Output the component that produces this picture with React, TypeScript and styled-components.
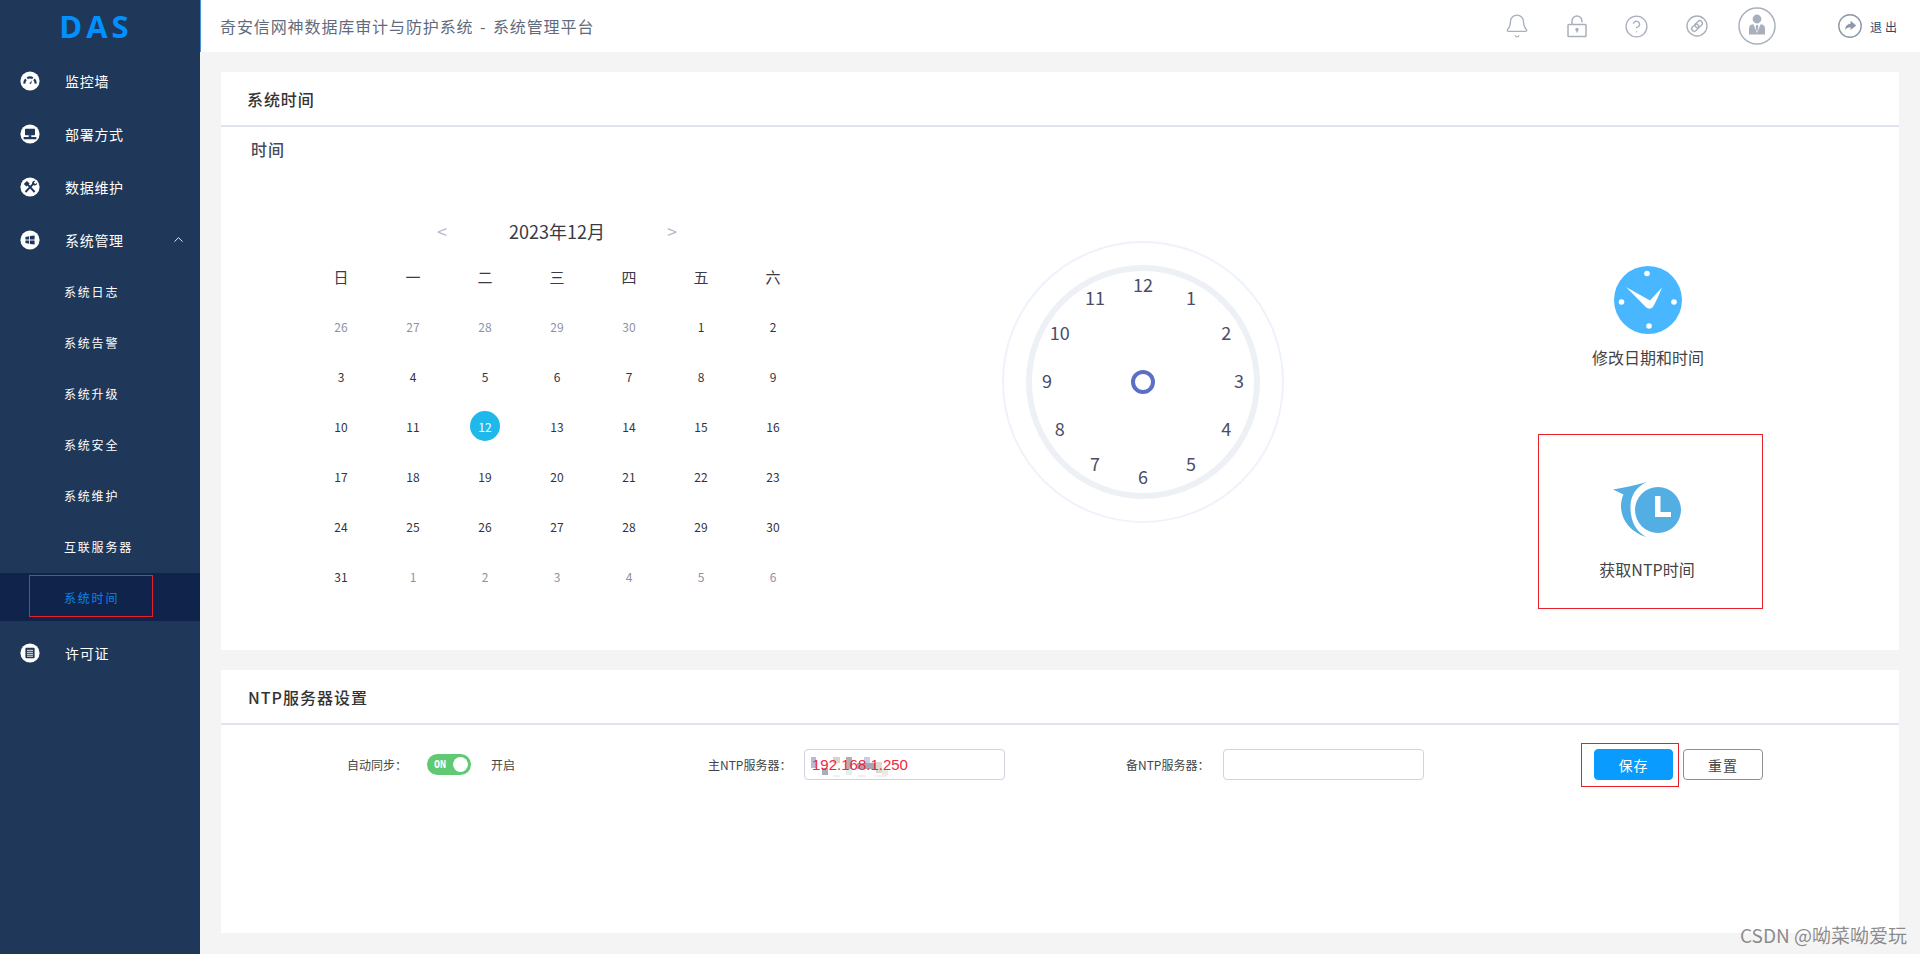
import React from "react";
import styled, { createGlobalStyle } from "styled-components";
import { Bell, ChevronUp, CircleHelp } from "lucide-react";

const GlobalStyle = createGlobalStyle`
  html, body {
    margin: 0;
    padding: 0;
    height: 100%;
    background: #f4f4f4;
    font-family: "Noto Sans CJK SC", "Noto Sans", sans-serif;
  }
  * { box-sizing: border-box; }
`;

const Layout = styled.div`
  display: flex;
  position: relative;
  height: 954px;
  overflow: hidden;
`;

/* ---------- sidebar ---------- */
const Sidebar = styled.aside`
  width: 200px;
  flex-shrink: 0;
  background: #1f3759;
  color: #fff;
`;

const Logo = styled.div`
  height: 54px;
  padding: 5px 8px 0 0;
  text-align: center;
  font-family: "Open Sans", "Noto Sans", sans-serif;
  font-size: 31px;
  line-height: 43px;
  font-weight: 700;
  letter-spacing: 4px;
  color: #0090ff;
`;

const MenuItem = styled.div`
  position: relative;
  display: flex;
  align-items: center;
  height: 53px;
  padding-left: 20px;
  font-size: 14px;
  letter-spacing: 0.7px;
`;

const MenuIcon = styled.span`
  display: flex;
  width: 20px;
  height: 20px;
  margin-right: 25px;
`;

const Caret = styled.span`
  position: absolute;
  left: 171px;
  top: 19px;
  display: flex;
  color: #e6ebf2;
`;

const SubList = styled.div`
  padding: 1px 0 5px;
`;

const SubItem = styled.div<{ $active?: boolean }>`
  position: relative;
  display: flex;
  align-items: center;
  height: 48px;
  margin-bottom: 3px;
  padding-left: 64px;
  font-size: 12px;
  letter-spacing: 1.8px;
  background: ${({ $active }) => ($active ? "#10244b" : "transparent")};
  color: ${({ $active }) => ($active ? "#0a84e8" : "#fff")};

  &:last-child {
    margin-bottom: 0;
  }
`;

const SubMark = styled.span`
  position: absolute;
  left: 29px;
  top: 2px;
  width: 124px;
  height: 42px;
  border: 1px solid #e8202c;
`;

/* ---------- top bar ---------- */
const Main = styled.div`
  flex: 1;
  min-width: 0;
  display: flex;
  flex-direction: column;
`;

const TopBar = styled.header`
  height: 52px;
  flex-shrink: 0;
  display: flex;
  align-items: center;
  justify-content: space-between;
  padding: 0 20px;
  background: #fff;
  box-shadow: inset 1px 0 0 #4a90d0;
`;

const PageTitle = styled.div`
  font-size: 16px;
  letter-spacing: 0.9px;
  word-spacing: 2px;
  color: #5f6b7c;
`;

const TopTools = styled.div`
  display: flex;
  align-items: center;
`;

const ToolSlot = styled.span`
  width: 60px;
  display: flex;
  justify-content: center;
  align-items: center;
  color: #a9b0bd;
`;

const Logout = styled.div`
  display: flex;
  align-items: center;
  gap: 8px;
  margin-left: 51px;
  font-size: 12px;
  letter-spacing: 3px;
  color: #2c4a6e;
`;

/* ---------- content ---------- */
const Content = styled.main`
  flex: 1;
  display: flex;
  flex-direction: column;
  gap: 20px;
  padding: 20px 21px 21px;
`;

const Panel = styled.section<{ $grow?: boolean }>`
  background: #fff;
  ${({ $grow }) => ($grow ? "flex: 1;" : "height: 578px;")}
`;

const PanelHead = styled.div<{ $tall?: boolean }>`
  height: 55px;
  display: flex;
  align-items: center;
  padding-left: ${({ $tall }) => ($tall ? "27px" : "26px")};
  font-size: 16px;
  font-weight: 500;
  letter-spacing: ${({ $tall }) => ($tall ? "1px" : "0.9px")};
  color: #333;
  border-bottom: 2px solid #e0e3f0;
`;

const SectionName = styled.div`
  padding: 10px 0 0 30px;
  font-size: 16px;
  line-height: 24px;
  font-weight: 500;
  letter-spacing: 1px;
  color: #454a5c;
`;

const TimeRow = styled.div`
  display: flex;
  align-items: flex-start;
  margin-top: 50px;
  padding-left: 84px;
`;

/* ---------- calendar ---------- */
const Calendar = styled.div`
  width: 504px;
  flex-shrink: 0;
`;

const CalendarHead = styled.div`
  height: 40px;
  display: flex;
  align-items: center;
  justify-content: center;
  font-size: 18px;
  color: #3a3a44;
`;

const MonthArrow = styled.span`
  width: 130px;
  text-align: center;
  font-size: 18px;
  color: #b9bbc9;
`;

const MonthLabel = styled.span`
  width: 100px;
  text-align: center;
  white-space: nowrap;
`;

const CalendarGrid = styled.div`
  display: grid;
  grid-template-columns: repeat(7, 72px);
  grid-auto-rows: 50px;
  place-items: center;
`;

const WeekDay = styled.div`
  font-size: 15px;
  color: #3a3a48;
`;

const Day = styled.div<{ $muted?: boolean; $today?: boolean }>`
  width: 30px;
  height: 30px;
  display: flex;
  align-items: center;
  justify-content: center;
  border-radius: 50%;
  font-size: 12px;
  background: ${({ $today }) => ($today ? "#1fb8ea" : "transparent")};
  color: ${({ $muted, $today }) =>
    $today ? "#fff" : $muted ? "#8e91a5" : "#33333f"};
`;

/* ---------- clock ---------- */
const Clock = styled.div`
  position: relative;
  width: 282px;
  height: 282px;
  flex-shrink: 0;
  margin: 30px 0 0 193px;
  border: 2px solid #eef3fb;
  border-radius: 50%;
`;

const ClockRing = styled.div`
  position: absolute;
  left: 22px;
  top: 22px;
  width: 234px;
  height: 234px;
  border: 6px solid #edf1f6;
  border-radius: 50%;
`;

const ClockHub = styled.div`
  position: absolute;
  left: 127px;
  top: 127px;
  width: 24px;
  height: 24px;
  border: 4px solid #5b6fc4;
  border-radius: 50%;
`;

const ClockNumber = styled.span`
  position: absolute;
  width: 30px;
  margin-left: -15px;
  margin-top: -13px;
  text-align: center;
  font-size: 18px;
  line-height: 26px;
  color: #4a4d68;
`;

/* ---------- right hand actions ---------- */
const Actions = styled.div`
  width: 225px;
  flex-shrink: 0;
  margin-left: 254px;
  display: flex;
  flex-direction: column;
  align-items: center;
`;

const ActionLabel = styled.div`
  font-size: 16px;
  line-height: 24px;
  color: #444;
`;

const ChangeTime = styled.div`
  display: flex;
  flex-direction: column;
  align-items: center;
  gap: 11px;
  margin-right: 5px;
  padding-top: 55px;
`;

const NtpTime = styled.div`
  width: 225px;
  height: 175px;
  margin-top: 65px;
  padding: 47px 7px 0 0;
  display: flex;
  flex-direction: column;
  align-items: center;
  gap: 19px;
  border: 1px solid #e8202c;
`;

/* ---------- NTP form ---------- */
const FormRow = styled.div`
  display: grid;
  grid-template-columns: 361px 418px 468px auto;
  align-items: center;
  margin-top: 24px;
  padding-left: 126px;
  font-size: 12px;
  color: #444;
`;

const Field = styled.div`
  display: flex;
  align-items: center;
  height: 31px;
`;

const FieldLabel = styled.span<{ $width: number }>`
  width: ${({ $width }) => $width}px;
  flex-shrink: 0;
  white-space: nowrap;
`;

const Toggle = styled.span`
  position: relative;
  width: 44px;
  height: 21px;
  margin-right: 20px;
  padding-left: 7px;
  border-radius: 11px;
  background: #5fc974;
  color: #fff;
  font-family: "DejaVu Sans Mono", monospace;
  font-size: 10px;
  font-weight: 700;
  line-height: 21px;
`;

const ToggleKnob = styled.span`
  position: absolute;
  right: 3px;
  top: 3px;
  width: 15px;
  height: 15px;
  border-radius: 50%;
  background: #fff;
`;

const InputBox = styled.div`
  position: relative;
  width: 201px;
  height: 31px;
  padding-left: 7px;
  border: 1px solid #cfd3e2;
  border-radius: 4px;
  background: #fff;
  font-family: "Liberation Sans", sans-serif;
  font-size: 15px;
  line-height: 29px;
  color: #f0283c;
`;

const Smudge = styled.svg`
  position: absolute;
  left: 0;
  top: 0;
`;

const InputText = styled.span`
  position: relative;
`;

const Buttons = styled.div`
  display: flex;
  gap: 10px;
`;

const SaveWrap = styled.div`
  position: relative;
`;

const SaveMark = styled.span`
  position: absolute;
  left: -13px;
  top: -6px;
  width: 98px;
  height: 44px;
  border: 1px solid #e8202c;
`;

const Button = styled.button<{ $primary?: boolean }>`
  display: block;
  width: ${({ $primary }) => ($primary ? "79px" : "80px")};
  height: 31px;
  padding: 0;
  font-family: inherit;
  font-size: 14px;
  letter-spacing: 1px;
  border-radius: 4px;
  border: 1px solid ${({ $primary }) => ($primary ? "#0a9bff" : "#8e8e8e")};
  background: ${({ $primary }) => ($primary ? "#0a9bff" : "#fff")};
  color: ${({ $primary }) => ($primary ? "#fff" : "#444")};
`;

const Watermark = styled.div`
  position: absolute;
  right: 13px;
  bottom: 8px;
  font-size: 19px;
  line-height: 22px;
  color: rgba(90, 90, 90, 0.7);
`;

/* ---------- drawn icons ---------- */
const GaugeIcon = () => (
  <svg width="20" height="20" viewBox="0 0 20 20">
    <circle cx="10" cy="10" r="9.6" fill="#fff" />
    <g fill="none" stroke="#1f3759" strokeWidth="2.2">
      <path d="M4.4 12.6a6 6 0 0 1 1.5-4.4" />
      <path d="M7.2 7.1a6 6 0 0 1 5.6 0" />
      <path d="M14.1 8.200a6 6 0 0 1 1.500 4.400" />
    </g>
    <path d="M9.300 12.400l2.700-3.200-.9 3.900z" fill="#1f3759" />
  </svg>
);

const MonitorIcon = () => (
  <svg width="20" height="20" viewBox="0 0 20 20">
    <circle cx="10" cy="10" r="9.6" fill="#fff" />
    <rect x="5" y="4.800" width="10" height="6.400" rx="0.6" fill="#1f3759" />
    <rect x="8.700" y="11.200" width="2.600" height="1.800" fill="#1f3759" />
    <rect x="3.600" y="13" width="12.800" height="2.200" rx="0.500" fill="#1f3759" />
  </svg>
);

const ToolsIcon = () => (
  <svg width="20" height="20" viewBox="0 0 20 20">
    <circle cx="10" cy="10" r="9.6" fill="#fff" />
    <path d="M5.500 15l8-8.400" stroke="#1f3759" strokeWidth="1.900" />
    <path d="M7.400 7.200l7.200 7.800" stroke="#1f3759" strokeWidth="1.900" />
    <path d="M3.800 7l3-3 2.800 2.600-3.200 3z" fill="#1f3759" />
    <path d="M12 6.600c0-2 1.600-3.200 3.500-2.800L13.900 5.500l.6 1.100 1.300.3 1.300-1.500c.3 2-1.300 3.400-3.200 3z" fill="#1f3759" />
  </svg>
);

const WindowsIcon = () => (
  <svg width="20" height="20" viewBox="0 0 20 20">
    <circle cx="10" cy="10" r="9.600" fill="#fff" />
    <path d="M5.400 6.900l3.800-.6v3.300H5.400zM10 6.100l4.600-.7v4.200H10zM5.400 10.400h3.800v3.300l-3.800-.6zM10 10.400h4.600v4.200l-4.600-.7z" fill="#1f3759" />
  </svg>
);

const LicenseIcon = () => (
  <svg width="20" height="20" viewBox="0 0 20 20">
    <circle cx="10" cy="10" r="9.600" fill="#fff" />
    <rect x="5.400" y="4.800" width="9.200" height="10.400" rx="1" fill="#1f3759" />
    <path d="M7 7.300h6M7 9.300h6M7 11.300h6M7 13.200h6" stroke="#fff" strokeWidth="0.900" />
  </svg>
);

const LockIcon = () => (
  <svg width="22" height="24" viewBox="0 0 22 24" fill="none" stroke="currentColor" strokeWidth="1.500">
    <rect x="2" y="10.500" width="18" height="12" rx="0.800" />
    <path d="M6 10.500V7a5 5 0 0 1 10 0v1.200" />
    <circle cx="11" cy="15.500" r="1" fill="currentColor" />
    <path d="M11 16v2.500" />
  </svg>
);

const LinkIcon = () => (
  <svg width="22" height="22" viewBox="0 0 22 22" fill="none" stroke="currentColor" strokeWidth="1.400">
    <circle cx="11" cy="11" r="10" />
    <g transform="rotate(-45 11 11)">
      <rect x="4.500" y="8.500" width="8" height="5" rx="2.500" />
      <rect x="9.500" y="8.500" width="8" height="5" rx="2.500" />
    </g>
  </svg>
);

const AvatarIcon = () => (
  <svg width="38" height="38" viewBox="0 0 38 38">
    <circle cx="19" cy="19" r="18" fill="none" stroke="currentColor" strokeWidth="1.500" />
    <circle cx="19" cy="12" r="4.400" fill="currentColor" />
    <path d="M11 27.500v-6.200c0-2.400 2-4 4.400-4L19 26l3.600-8.700c2.400 0 4.400 1.600 4.400 4v6.200z" fill="currentColor" />
    <path d="M18.200 18h1.600l.5 1.600-.6 3.600-.7 1-.7-1-.6-3.600z" fill="currentColor" />
  </svg>
);

const ExitIcon = () => (
  <svg width="24" height="24" viewBox="0 0 24 24">
    <circle cx="12" cy="12" r="11.200" fill="none" stroke="#8e98a8" strokeWidth="1.400" />
    <path d="M12.600 6.800l5.600 4.600-5.600 4.600v-2.800c-2.600 0-4.200.8-5.600 2.600.3-3.400 2.200-5.800 5.600-6.200z" fill="#8e98a8" />
  </svg>
);

const ClockFaceIcon = () => (
  <svg width="68" height="68" viewBox="0 0 68 68">
    <circle cx="34" cy="34" r="34" fill="#48b7ff" />
    <circle cx="33" cy="7.500" r="2.800" fill="#fff" />
    <circle cx="7.500" cy="36" r="2.800" fill="#fff" />
    <circle cx="60" cy="36" r="2.800" fill="#fff" />
    <circle cx="35" cy="60" r="2.800" fill="#fff" />
    <path d="M12 21l24 13.500L48 21.500c-2.500 6.500-5.500 13-8.500 18.500-1.800 3.200-4.800 3.400-7.500 1.200z" fill="#fff" />
  </svg>
);

const SyncClockIcon = () => (
  <svg width="68" height="56" viewBox="0 0 68 56">
    <circle cx="45" cy="28" r="23" fill="#52aee3" />
    <path d="M42 14h5.500v16H58v5H42z" fill="#fff" />
    <path d="M0 7.500C11 6 23 3 34 0 22 5 17 15 17.500 27 18 40 23 49 33 55 18 50 8.500 39 8 25c-.1-5 .8-9 2.500-12.500z" fill="#52aee3" />
  </svg>
);

/* ---------- data ---------- */
const mainMenu = [
  { label: "监控墙", icon: <GaugeIcon /> },
  { label: "部署方式", icon: <MonitorIcon /> },
  { label: "数据维护", icon: <ToolsIcon /> },
];

const subMenu = ["系统日志", "系统告警", "系统升级", "系统安全", "系统维护", "互联服务器", "系统时间"];

const weekDays = ["日", "一", "二", "三", "四", "五", "六"];

const leading = [26, 27, 28, 29, 30];
const december = Array.from({ length: 31 }, (_, i) => i + 1);
const trailing = [1, 2, 3, 4, 5, 6];

const hours = Array.from({ length: 12 }, (_, i) => i + 1);

// numbers sit on a circle around the hub
const hourPosition = (hour: number) => {
  const angle = (hour * Math.PI) / 6;
  return {
    left: 139 + 96 * Math.sin(angle),
    top: 137 - 96 * Math.cos(angle),
  };
};

// pixelated patch left under the address text
const smudgeBlocks = [
  { x: 6, y: 7, w: 5, h: 11, fill: "#b9b9d8" },
  { x: 17, y: 18, w: 6, h: 7, fill: "#a9adb8" },
  { x: 28, y: 7, w: 7, h: 6, fill: "#d8d4cc" },
  { x: 41, y: 7, w: 6, h: 12, fill: "#b5aeb0" },
  { x: 41, y: 19, w: 6, h: 6, fill: "#e4eeec" },
  { x: 59, y: 7, w: 6, h: 6, fill: "#c5cfe6" },
  { x: 52, y: 13, w: 19, h: 6, fill: "#a9a6b4" },
  { x: 71, y: 12, w: 6, h: 11, fill: "#dcd8d2" },
  { x: 77, y: 19, w: 6, h: 6, fill: "#ece8e4" },
  { x: 28, y: 25, w: 7, h: 2, fill: "#eef0f4" },
  { x: 53, y: 25, w: 8, h: 2, fill: "#eef0f4" },
  { x: 71, y: 25, w: 11, h: 2, fill: "#eef0f4" },
];

const App: React.FC = () => {
  return (
    <Layout>
      <GlobalStyle />
      <Sidebar>
        <Logo>DAS</Logo>
        {mainMenu.map((item) => (
          <MenuItem key={item.label}>
            <MenuIcon>{item.icon}</MenuIcon>
            {item.label}
          </MenuItem>
        ))}
        <MenuItem>
          <MenuIcon>
            <WindowsIcon />
          </MenuIcon>
          系统管理
          <Caret>
            <ChevronUp size={15} strokeWidth={1.6} />
          </Caret>
        </MenuItem>
        <SubList>
          {subMenu.map((name) => (
            <SubItem key={name} $active={name === "系统时间"}>
              {name === "系统时间" && <SubMark />}
              {name}
            </SubItem>
          ))}
        </SubList>
        <MenuItem>
          <MenuIcon>
            <LicenseIcon />
          </MenuIcon>
          许可证
        </MenuItem>
      </Sidebar>

      <Main>
        <TopBar>
          <PageTitle>奇安信网神数据库审计与防护系统 - 系统管理平台</PageTitle>
          <TopTools>
            <ToolSlot>
              <Bell size={26} strokeWidth={1.2} />
            </ToolSlot>
            <ToolSlot>
              <LockIcon />
            </ToolSlot>
            <ToolSlot>
              <CircleHelp size={25} strokeWidth={1.3} />
            </ToolSlot>
            <ToolSlot>
              <LinkIcon />
            </ToolSlot>
            <ToolSlot>
              <AvatarIcon />
            </ToolSlot>
            <Logout>
              <ExitIcon />
              退出
            </Logout>
          </TopTools>
        </TopBar>

        <Content>
          <Panel>
            <PanelHead>系统时间</PanelHead>
            <SectionName>时间</SectionName>
            <TimeRow>
              <Calendar>
                <CalendarHead>
                  <MonthArrow>&lt;</MonthArrow>
                  <MonthLabel>2023年12月</MonthLabel>
                  <MonthArrow>&gt;</MonthArrow>
                </CalendarHead>
                <CalendarGrid>
                  {weekDays.map((d) => (
                    <WeekDay key={d}>{d}</WeekDay>
                  ))}
                  {leading.map((d) => (
                    <Day key={`prev-${d}`} $muted>
                      {d}
                    </Day>
                  ))}
                  {december.map((d) => (
                    <Day key={d} $today={d === 12}>
                      {d}
                    </Day>
                  ))}
                  {trailing.map((d) => (
                    <Day key={`next-${d}`} $muted>
                      {d}
                    </Day>
                  ))}
                </CalendarGrid>
              </Calendar>

              <Clock>
                <ClockRing />
                <ClockHub />
                {hours.map((h) => (
                  <ClockNumber key={h} style={hourPosition(h)}>
                    {h}
                  </ClockNumber>
                ))}
              </Clock>

              <Actions>
                <ChangeTime>
                  <ClockFaceIcon />
                  <ActionLabel>修改日期和时间</ActionLabel>
                </ChangeTime>
                <NtpTime>
                  <SyncClockIcon />
                  <ActionLabel>获取NTP时间</ActionLabel>
                </NtpTime>
              </Actions>
            </TimeRow>
          </Panel>

          <Panel $grow>
            <PanelHead $tall>NTP服务器设置</PanelHead>
            <FormRow>
              <Field>
                <FieldLabel $width={80}>自动同步：</FieldLabel>
                <Toggle>
                  ON
                  <ToggleKnob />
                </Toggle>
                开启
              </Field>
              <Field>
                <FieldLabel $width={96}>主NTP服务器：</FieldLabel>
                <InputBox>
                  <Smudge width="100" height="29">
                    {smudgeBlocks.map((b) => (
                      <rect key={`${b.x}-${b.y}`} x={b.x} y={b.y} width={b.w} height={b.h} fill={b.fill} />
                    ))}
                  </Smudge>
                  <InputText>192.168.1.250</InputText>
                </InputBox>
              </Field>
              <Field>
                <FieldLabel $width={97}>备NTP服务器：</FieldLabel>
                <InputBox />
              </Field>
              <Buttons>
                <SaveWrap>
                  <Button $primary>保存</Button>
                  <SaveMark />
                </SaveWrap>
                <Button>重置</Button>
              </Buttons>
            </FormRow>
          </Panel>
        </Content>
      </Main>

      <Watermark>CSDN @呦菜呦爱玩</Watermark>
    </Layout>
  );
};

export default App;
